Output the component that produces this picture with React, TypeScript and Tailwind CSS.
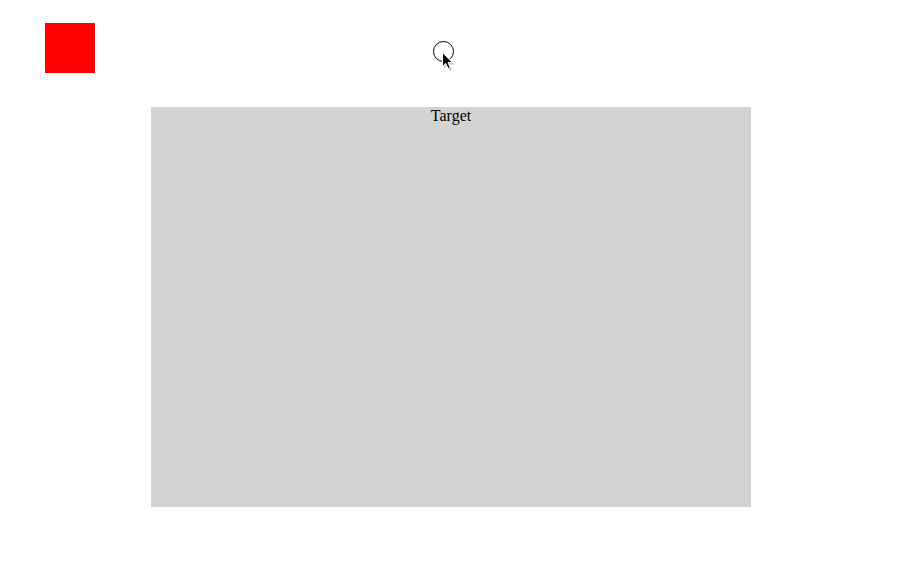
export default function App() {
  return (
    <div className="relative w-[915px] h-[571px] bg-white overflow-hidden" style={{ fontFamily: '"Liberation Serif", serif' }}>
      <div className="flex flex-col">
        <div className="ml-[45px] mt-[23px] w-[50px] h-[50px] bg-[#ff0000]" />
        <div className="ml-[151px] mt-[34px] w-[600px] h-[400px] bg-[#d3d3d3] flex justify-center">
          <span className="text-[16px] leading-[18px] text-black">Target</span>
        </div>
      </div>
      <div className="absolute left-[433px] top-[41px] w-[21px] h-[21px] rounded-full border border-black" />
      <svg className="absolute left-[440px] top-[50px]" width="16" height="22" viewBox="0 0 16 22">
        <path d="M3.5 3.5 L3.5 17.5 L6.8 14.4 L9 19.6 L11.2 18.6 L9 13.6 L13.4 13.6 Z" fill="rgba(0,0,0,0.25)" transform="translate(0.6,0.8)" />
        <path d="M2.5 2.5 L2.5 16.5 L5.8 13.4 L8 18.6 L10.2 17.6 L8 12.6 L12.4 12.6 Z" fill="black" stroke="white" strokeWidth="1" strokeLinejoin="round" />
      </svg>
    </div>
  );
}
